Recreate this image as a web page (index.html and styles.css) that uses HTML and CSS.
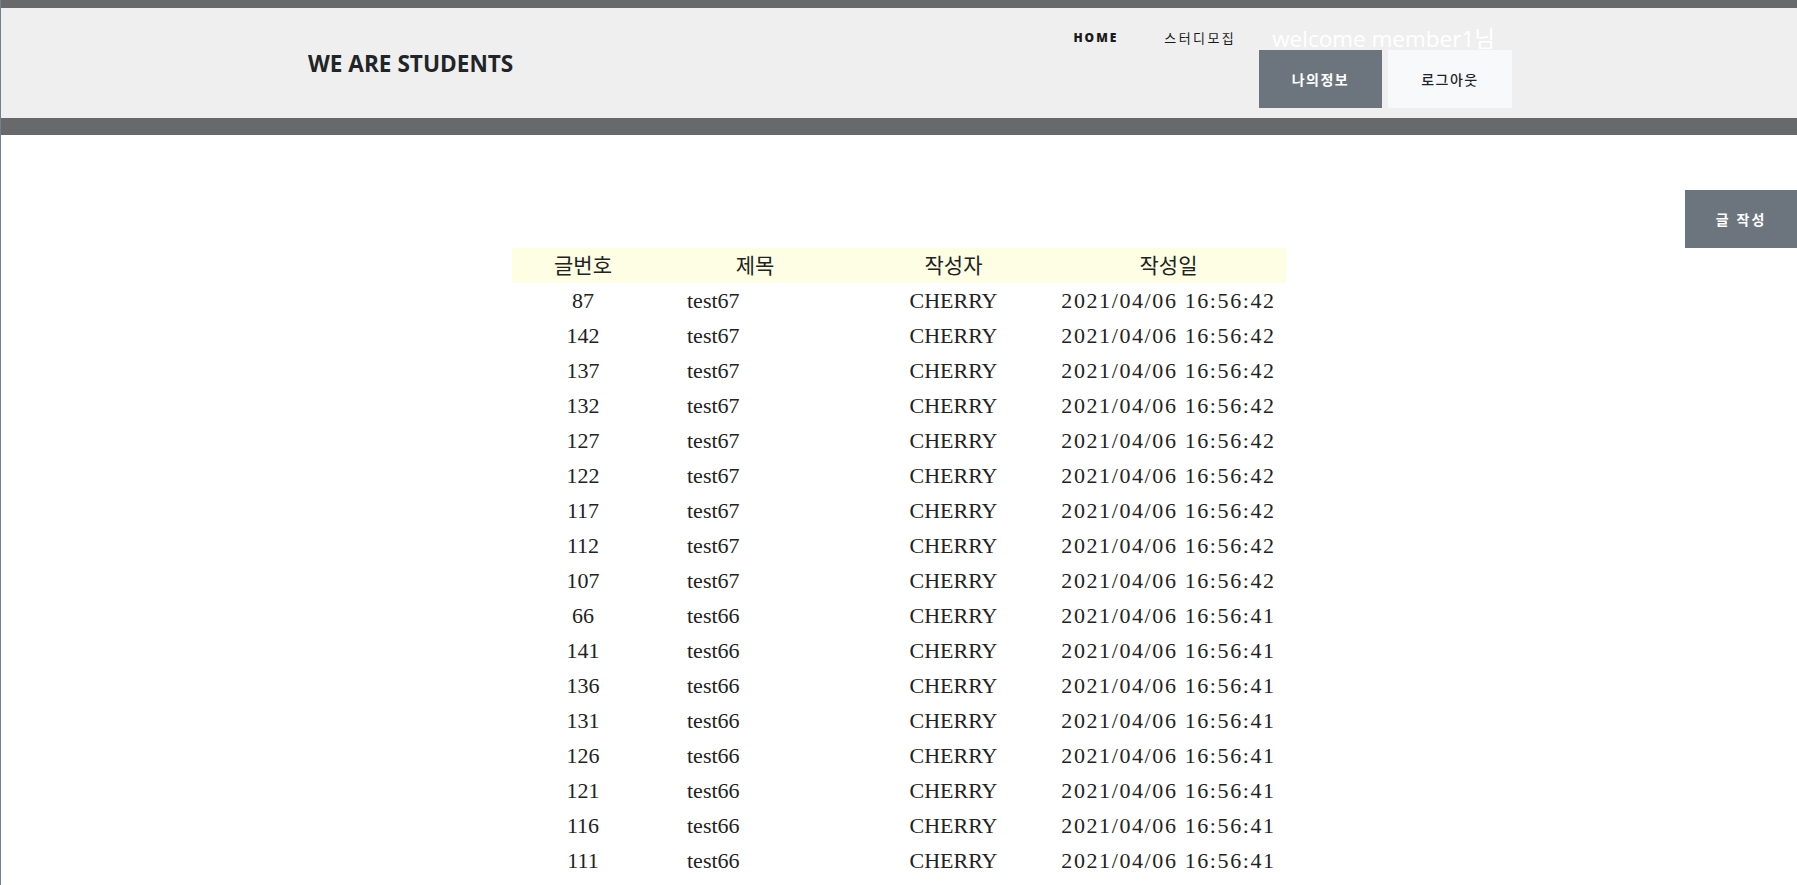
FILE: index.html
```html
<!DOCTYPE html>
<html lang="ko">
<head>
<meta charset="utf-8">
<title>WE ARE STUDENTS</title>
<link rel="stylesheet" href="styles.css">
</head>
<body>
<header class="topbar">
  <div class="topbar-inner">
    <div class="brand">WE ARE STUDENTS</div>
    <div class="right-group">
      <nav class="nav-row">
        <a class="nav-link home">HOME</a>
        <a class="nav-link study">스터디모집</a>
        <span class="welcome">welcome member1님</span>
      </nav>
      <div class="btn-row">
        <a class="btn btn-dark">나의정보</a>
        <a class="btn btn-light">로그아웃</a>
      </div>
    </div>
  </div>
</header>
<main class="content">
  <div class="write-row">
    <a class="btn btn-write">글 작성</a>
  </div>
  <table class="board">
    <colgroup>
      <col class="c1"><col class="c2"><col class="c3"><col class="c4">
    </colgroup>
    <thead>
      <tr><th>글번호</th><th>제목</th><th>작성자</th><th>작성일</th></tr>
    </thead>
    <tbody>
      <tr><td>87</td><td class="title">test67</td><td>CHERRY</td><td class="date">2021/04/06 16:56:42</td></tr>
      <tr><td>142</td><td class="title">test67</td><td>CHERRY</td><td class="date">2021/04/06 16:56:42</td></tr>
      <tr><td>137</td><td class="title">test67</td><td>CHERRY</td><td class="date">2021/04/06 16:56:42</td></tr>
      <tr><td>132</td><td class="title">test67</td><td>CHERRY</td><td class="date">2021/04/06 16:56:42</td></tr>
      <tr><td>127</td><td class="title">test67</td><td>CHERRY</td><td class="date">2021/04/06 16:56:42</td></tr>
      <tr><td>122</td><td class="title">test67</td><td>CHERRY</td><td class="date">2021/04/06 16:56:42</td></tr>
      <tr><td>117</td><td class="title">test67</td><td>CHERRY</td><td class="date">2021/04/06 16:56:42</td></tr>
      <tr><td>112</td><td class="title">test67</td><td>CHERRY</td><td class="date">2021/04/06 16:56:42</td></tr>
      <tr><td>107</td><td class="title">test67</td><td>CHERRY</td><td class="date">2021/04/06 16:56:42</td></tr>
      <tr><td>66</td><td class="title">test66</td><td>CHERRY</td><td class="date">2021/04/06 16:56:41</td></tr>
      <tr><td>141</td><td class="title">test66</td><td>CHERRY</td><td class="date">2021/04/06 16:56:41</td></tr>
      <tr><td>136</td><td class="title">test66</td><td>CHERRY</td><td class="date">2021/04/06 16:56:41</td></tr>
      <tr><td>131</td><td class="title">test66</td><td>CHERRY</td><td class="date">2021/04/06 16:56:41</td></tr>
      <tr><td>126</td><td class="title">test66</td><td>CHERRY</td><td class="date">2021/04/06 16:56:41</td></tr>
      <tr><td>121</td><td class="title">test66</td><td>CHERRY</td><td class="date">2021/04/06 16:56:41</td></tr>
      <tr><td>116</td><td class="title">test66</td><td>CHERRY</td><td class="date">2021/04/06 16:56:41</td></tr>
      <tr><td>111</td><td class="title">test66</td><td>CHERRY</td><td class="date">2021/04/06 16:56:41</td></tr>
    </tbody>
  </table>
</main>
</body>
</html>
```
FILE: styles.css
```css
html {
  height: 100%;
}
body {
  margin: 0;
  min-height: 100%;
  overflow: hidden;
  background: #ffffff;
  border-left: 1px solid #737f8a;
  box-sizing: border-box;
  font-family: "Open Sans", "Noto Sans CJK KR", sans-serif;
  color: #212529;
}
a {
  text-decoration: none;
  color: inherit;
}

/* header */
.topbar {
  background: #efefef;
  border-top: 8px solid #68696b;
  border-bottom: 17px solid #68696b;
}
.topbar-inner {
  height: 110px;
  display: flex;
  align-items: center;
  padding-left: 307px;
  padding-right: 285px;
}
.brand {
  font-family: "Open Sans", sans-serif;
  font-weight: 700;
  font-size: 22.6px;
  color: #212529;
}
.right-group {
  margin-left: auto;
  align-self: stretch;
  display: flex;
  flex-direction: column;
  align-items: flex-end;
  padding-top: 16px;
}
.nav-row {
  height: 26px;
  display: flex;
  align-items: center;
  padding-right: 17px;
}
.nav-link {
  font-size: 12px;
  letter-spacing: 2px;
  color: #1a1a1a;
}
.nav-link.home {
  font-weight: 800;
}
.nav-link.study {
  margin-left: 46px;
  font-size: 13px;
  letter-spacing: 2.4px;
  font-family: "Noto Sans CJK KR", sans-serif;
  font-weight: 400;
}
.welcome {
  margin-left: 36px;
  font-size: 22.5px;
  color: #ffffff;
  font-family: "Open Sans", "Noto Sans CJK KR", sans-serif;
}
.btn-row {
  display: flex;
  gap: 6px;
}
.btn {
  display: flex;
  align-items: center;
  justify-content: center;
  height: 58px;
  font-family: "Noto Sans CJK KR", "Open Sans", sans-serif;
  font-size: 14px;
  letter-spacing: 1.5px;
}
.btn-dark {
  width: 123px;
  background: #6c757d;
  color: #ffffff;
  font-weight: 700;
}
.btn-light {
  width: 124px;
  background: #f8f9fa;
  color: #212529;
  font-weight: 500;
}

/* content */
.content {
  display: flex;
  flex-direction: column;
}
.write-row {
  display: flex;
  justify-content: flex-end;
  margin-top: 55px;
}
.btn-write {
  width: 112px;
  background: #6c757d;
  color: #ffffff;
  font-weight: 700;
  letter-spacing: 2px;
}
.board {
  align-self: center;
  width: 774px;
  border-collapse: collapse;
  table-layout: fixed;
  font-family: "Liberation Serif", "Noto Sans CJK KR", serif;
  font-size: 22px;
  color: #222222;
}
.c1 { width: 142px; }
.c2 { width: 202px; }
.c3 { width: 195px; }
.c4 { width: 235px; }
.board thead tr {
  background: #fefee4;
}
.board th {
  height: 35px;
  padding: 0 0 4px 0;
  box-sizing: border-box;
  font-weight: 400;
  font-size: 21px;
  font-family: "Noto Sans CJK KR", serif;
  text-align: center;
  vertical-align: middle;
}
.board td {
  height: 35px;
  padding: 0;
  text-align: center;
  vertical-align: middle;
  white-space: nowrap;
}
.board td.title {
  text-align: left;
  padding-left: 33px;
}
.board td.date {
  letter-spacing: 1.6px;
}
```
